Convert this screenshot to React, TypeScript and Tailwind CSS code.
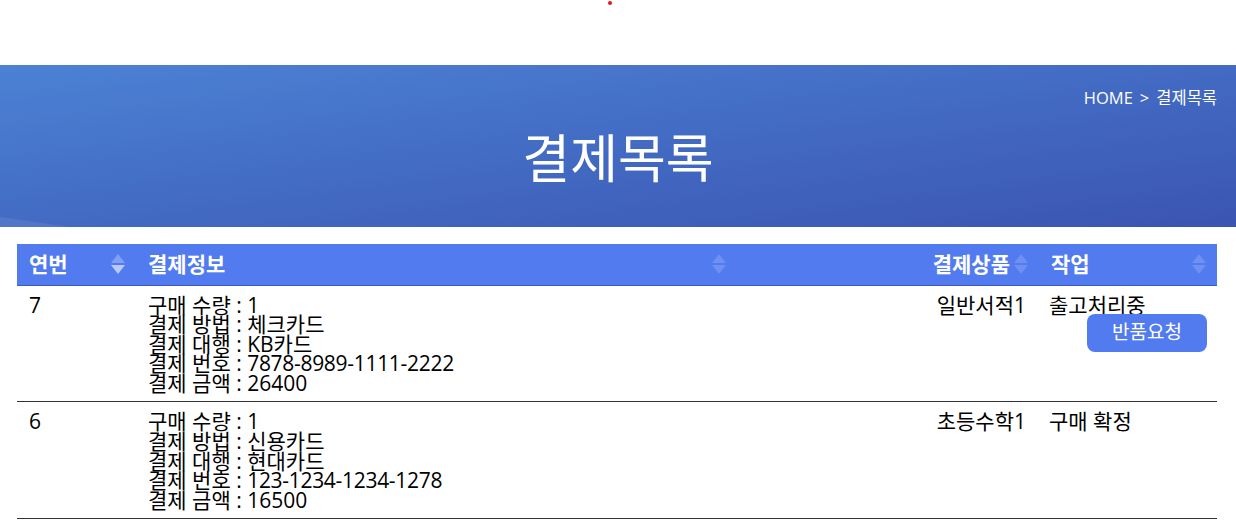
import React from 'react';

type Payment = {
  no: number;
  qty: string;
  method: string;
  agency: string;
  number: string;
  amount: string;
  product: string;
  status: string;
  canReturn: boolean;
};

const PAYMENTS: Payment[] = [
  {
    no: 7,
    qty: '1',
    method: '체크카드',
    agency: 'KB카드',
    number: '7878-8989-1111-2222',
    amount: '26400',
    product: '일반서적1',
    status: '출고처리중',
    canReturn: true,
  },
  {
    no: 6,
    qty: '1',
    method: '신용카드',
    agency: '현대카드',
    number: '123-1234-1234-1278',
    amount: '16500',
    product: '초등수학1',
    status: '구매 확정',
    canReturn: false,
  },
];

const SortIcon: React.FC<{ active?: boolean }> = ({ active }) => (
  <svg width="14" height="20" viewBox="0 0 14 20" className="absolute right-[11px] top-1/2 -translate-y-1/2">
    <polygon points="7,0 14,9 0,9" fill="white" fillOpacity={active ? 0.28 : 0.16} />
    <polygon points="0,11 14,11 7,20" fill="white" fillOpacity={active ? 0.6 : 0.16} />
  </svg>
);

const Th: React.FC<{ children: React.ReactNode; right?: boolean; active?: boolean }> = ({ children, right, active }) => (
  <th
    className={`relative h-[41px] pl-3 pr-[29px] font-bold text-[21px] leading-[24px] text-white border-b border-[#3d5cc2] ${
      right ? 'text-right' : 'text-left'
    }`}
  >
    {children}
    <SortIcon active={active} />
  </th>
);

export default function App() {
  return (
    <div className="min-h-screen w-full bg-white font-['Open_Sans','Noto_Sans_CJK_KR',sans-serif] text-black">
      {/* top bar */}
      <div className="relative h-[65px]">
        <span className="absolute left-[608px] top-[1px] h-[4px] w-[4px] rounded-full bg-[#e8121b]" />
      </div>

      {/* banner */}
      <div className="relative h-[162px] overflow-hidden bg-gradient-to-br from-[#4b82d4] to-[#3b54b2]">
        <svg className="absolute bottom-0 left-0" width="70" height="10" viewBox="0 0 70 10">
          <polygon points="0,0 70,10 0,10" fill="white" fillOpacity="0.08" />
        </svg>
        <div className="flex justify-end pr-[19px] pt-[22px] text-[16.5px] leading-[22px] text-white">
          HOME <span className="mx-[7px]">&gt;</span> 결제목록
        </div>
        <h1 className="mt-[16px] text-center text-[52px] leading-[66px] font-normal text-white">결제목록</h1>
      </div>

      {/* table */}
      <div className="pl-[17px] pr-[19px] pt-[17px]">
        <table className="w-full table-fixed border-collapse">
          <colgroup>
            <col className="w-[119px]" />
            <col />
            <col className="w-[302px]" />
            <col className="w-[178px]" />
          </colgroup>
          <thead className="bg-[#527bf0]">
            <tr>
              <Th active>연번</Th>
              <Th>결제정보</Th>
              <Th right>결제상품</Th>
              <Th>작업</Th>
            </tr>
          </thead>
          <tbody>
            {PAYMENTS.map((p) => (
              <tr key={p.no} className="border-b border-[#333333] align-top text-[21px] leading-[19.6px]">
                <td className="pl-3 pt-[10px] pb-[8px]">{p.no}</td>
                <td className="pl-3 pt-[10px] pb-[8px]">
                  <div>구매 수량 : {p.qty}</div>
                  <div>결제 방법 : {p.method}</div>
                  <div>결제 대행 : {p.agency}</div>
                  <div>
                    결제 번호 : <span className="tracking-[-0.3px]">{p.number}</span>
                  </div>
                  <div>결제 금액 : {p.amount}</div>
                </td>
                <td className="pr-[13px] pt-[10px] text-right">{p.product}</td>
                <td className="pl-[10px] pr-[10px] pt-[10px]">
                  <div>{p.status}</div>
                  {p.canReturn && (
                    <div className="flex justify-end">
                      <button className="mt-[-1px] h-[38px] w-[120px] rounded-[8px] bg-[#527bf0] text-[19px] text-white">
                        반품요청
                      </button>
                    </div>
                  )}
                </td>
              </tr>
            ))}
          </tbody>
        </table>
      </div>
    </div>
  );
}
